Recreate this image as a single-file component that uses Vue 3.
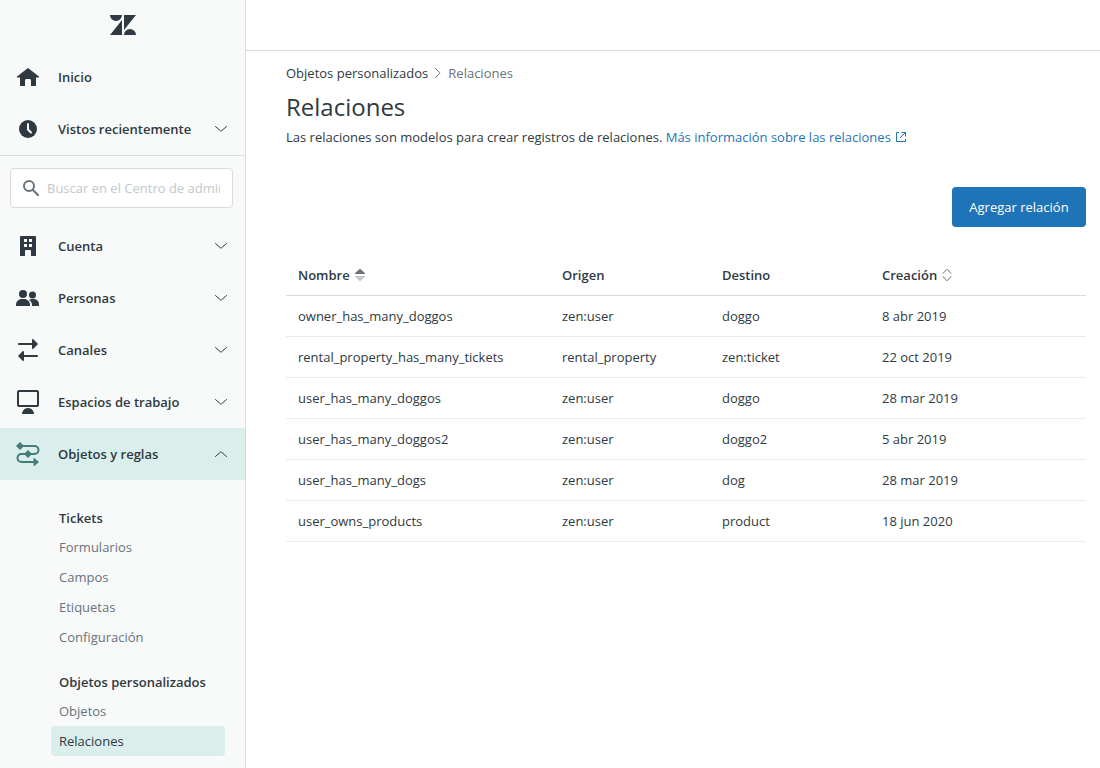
<script setup>
import { ref } from 'vue'

const query = ref('')

const mainItems = [
  { id: 'cuenta', label: 'Cuenta' },
  { id: 'personas', label: 'Personas' },
  { id: 'canales', label: 'Canales' },
  { id: 'espacios', label: 'Espacios de trabajo' },
  { id: 'objetos', label: 'Objetos y reglas', open: true },
]

const groups = [
  { title: 'Tickets', links: ['Formularios', 'Campos', 'Etiquetas', 'Configuración'] },
  { title: 'Objetos personalizados', links: ['Objetos', 'Relaciones'] },
]

const rows = [
  ['owner_has_many_doggos', 'zen:user', 'doggo', '8 abr 2019'],
  ['rental_property_has_many_tickets', 'rental_property', 'zen:ticket', '22 oct 2019'],
  ['user_has_many_doggos', 'zen:user', 'doggo', '28 mar 2019'],
  ['user_has_many_doggos2', 'zen:user', 'doggo2', '5 abr 2019'],
  ['user_has_many_dogs', 'zen:user', 'dog', '28 mar 2019'],
  ['user_owns_products', 'zen:user', 'product', '18 jun 2020'],
]
</script>

<template>
  <div class="app">
    <aside class="sidebar">
      <div class="logo">
        <svg width="26" height="20" viewBox="0 0 26 20" role="img" aria-label="Zendesk">
          <path d="M0 0h12a6 6 0 0 1-12 0zM12 5v15H0zM14 0h12L14 15zM14 20a6 6 0 0 1 12 0z" />
        </svg>
      </div>

      <nav class="nav top">
        <a class="item" href="#">
          <svg class="icon" viewBox="0 0 24 24" aria-hidden="true">
            <path d="M12 3l11 8.500c.4.400.2 1-.4 1H20V20c0 .6-.4 1-1 1h-4v-5.500c0-1-.8-1.500-1.500-1.500h-3C9.800 14 9 14.500 9 15.500V21H5c-.6 0-1-.4-1-1v-7.500H1.400c-.6 0-.8-.6-.4-1z" />
          </svg>
          <span class="label">Inicio</span>
        </a>
        <button class="item" type="button">
          <svg class="icon" viewBox="0 0 24 24" aria-hidden="true">
            <circle cx="12" cy="12" r="9" />
            <path class="clock-hands" d="M12 7v5.500l3 3" />
          </svg>
          <span class="label">Vistos recientemente</span>
          <svg class="chevron" viewBox="0 0 12 12" aria-hidden="true"><path d="M.500 3.500l4.900 4.300c.3.300.9.300 1.200 0l4.900-4.300" /></svg>
        </button>
      </nav>

      <label class="search">
        <svg viewBox="0 0 16 16" aria-hidden="true">
          <circle cx="6" cy="6" r="5" />
          <path d="M9.700 9.700l5.500 5.500" />
        </svg>
        <input v-model="query" type="text" aria-label="Buscar" placeholder="Buscar en el Centro de administración" />
      </label>

      <nav class="nav">
        <button
          v-for="item in mainItems"
          :key="item.id"
          type="button"
          class="item"
          :class="{ open: item.open }"
          :aria-expanded="!!item.open"
        >
          <svg class="icon" viewBox="0 0 24 24" aria-hidden="true">
            <path
              v-if="item.id === 'cuenta'"
              fill-rule="evenodd"
              d="M5 2h14a1 1 0 0 1 1 1v19h-5v-5a1 1 0 0 0-1-1h-4a1 1 0 0 0-1 1v5H4V3a1 1 0 0 1 1-1zM8 5v3h3V5zM13 5v3h3V5zM8 10v3h3v-3zM13 10v3h3v-3z"
            />
            <g v-else-if="item.id === 'personas'">
              <circle cx="7" cy="8" r="4" />
              <circle cx="16.500" cy="9" r="3.500" />
              <path d="M0 20v-1c0-3.500 2.500-6 6-6h2c3.500 0 6 2.500 6 6v1zM13 14c.8-.6 1.800-1 3-1h1.500c3.300 0 5.500 2.300 5.500 5.500V20h-7v-1c0-2-.9-3.700-3-5z" />
            </g>
            <g v-else-if="item.id === 'canales'">
              <path class="line" d="M3 6h13M8 18h13" />
              <path d="M16 1.800c0-.8.800-1.100 1.400-.6L22 6l-4.600 4.800c-.6.500-1.400.2-1.400-.6zM8 13.800c0-.8-.8-1.100-1.400-.6L2 18l4.600 4.800c.6.500 1.400.2 1.400-.6z" />
            </g>
            <g v-else-if="item.id === 'espacios'">
              <rect class="line" x="2" y="1" width="20" height="15" rx="1" />
              <path d="M6 24c0-3 2.500-6 6-6s6 3 6 6z" />
            </g>
            <g v-else>
              <path class="line" d="M3 4h15.500a4 4 0 0 1 0 8h-13a4 4 0 0 0 0 8H19" />
              <path d="M4 0L8 4 4 8 0 4zM12 8l4 4-4 4-4-4zM17.500 16.800c0-.8.600-1 1.100-.6L23 20l-4.400 3.800c-.5.400-1.100.2-1.100-.6z" />
            </g>
          </svg>
          <span class="label">{{ item.label }}</span>
          <svg class="chevron" viewBox="0 0 12 12" aria-hidden="true"><path d="M.500 3.500l4.900 4.300c.3.300.9.300 1.200 0l4.900-4.300" /></svg>
        </button>
      </nav>

      <section v-for="group in groups" :key="group.title" class="group">
        <h2>{{ group.title }}</h2>
        <a v-for="link in group.links" :key="link" href="#" :class="{ current: link === 'Relaciones' }">{{ link }}</a>
      </section>
    </aside>

    <div class="content">
      <header class="topbar"></header>
      <main>
        <nav class="crumbs" aria-label="Ruta">
          <a href="#">Objetos personalizados</a>
          <svg viewBox="0 0 12 12" aria-hidden="true"><path d="M3.500 1.500l4.200 4c.3.300.3.700 0 1l-4.200 4" /></svg>
          <span>Relaciones</span>
        </nav>
        <h1>Relaciones</h1>
        <p class="intro">
          Las relaciones son modelos para crear registros de relaciones.
          <a href="#">Más información sobre las relaciones<svg viewBox="0 0 12 12" aria-hidden="true"><path d="M4 1.500H1.500v9h9V8M6.500 1.500h4v4M10.500 1.500L5 7" /></svg></a>
        </p>

        <div class="actions">
          <button class="primary" type="button">Agregar relación</button>
        </div>

        <table>
          <thead>
            <tr>
              <th class="name" aria-sort="ascending">
                <button type="button">
                  Nombre
                  <svg viewBox="0 0 12 14" aria-hidden="true"><path class="up" d="M5.300 1.300L1 5.300c-.3.300-.1.700.3.700h9.400c.4 0 .6-.4.300-.7l-4.300-4c-.4-.4-1-.4-1.400 0z" /><path class="down" d="M5.300 12.700L1 8.700c-.3-.3-.1-.7.300-.7h9.400c.4 0 .6.400.3.700l-4.300 4c-.4.400-1 .4-1.400 0z" /></svg>
                </button>
              </th>
              <th class="mid">Origen</th>
              <th class="mid">Destino</th>
              <th>
                <button type="button">
                  Creación
                  <svg class="unsorted" viewBox="0 0 12 14" aria-hidden="true"><path d="M2 5.500l3.600-4c.3-.3.500-.3.800 0l3.600 4M2 8.500l3.600 4c.3.300.5.300.8 0l3.600-4" /></svg>
                </button>
              </th>
            </tr>
          </thead>
          <tbody>
            <tr v-for="row in rows" :key="row[0]">
              <td v-for="(cell, i) in row" :key="i">{{ cell }}</td>
            </tr>
          </tbody>
        </table>
      </main>
    </div>
  </div>
</template>

<style>
body {
  margin: 0;
  background: #fff;
}
</style>

<style scoped>
.app {
  display: flex;
  min-height: 100vh;
  color: #2f3941;
  font: 13px/20px "Open Sans", "Noto Sans", sans-serif;
}
* {
  box-sizing: border-box;
}
a {
  color: inherit;
  text-decoration: none;
}
button {
  font: inherit;
  color: inherit;
  border: 0;
  padding: 0;
  background: none;
  text-align: left;
}
.sidebar {
  flex: 0 0 246px;
  min-width: 0;
  background: #f8f9f9;
  border-right: 1px solid #d8dcde;
  padding-bottom: 12px;
}
.logo {
  height: 50px;
  margin-bottom: 1px;
  display: flex;
  align-items: center;
  justify-content: center;
}
.logo svg {
  fill: #2f3941;
}
.nav {
  display: flex;
  flex-direction: column;
}
.nav.top {
  border-bottom: 1px solid #d8dcde;
}
.item {
  display: flex;
  align-items: center;
  height: 52px;
  padding: 0 18px 0 16px;
  font-weight: 600;
}
.item.open {
  background: #daeeec;
}
.icon {
  width: 24px;
  height: 24px;
  margin-right: 18px;
  fill: #2f3941;
}
.icon .line {
  fill: none;
  stroke: #2f3941;
  stroke-width: 2;
  stroke-linecap: round;
}
.item.open .icon {
  fill: #467b7c;
}
.item.open .line {
  stroke: #467b7c;
}
.icon .clock-hands {
  fill: none;
  stroke: #f8f9f9;
  stroke-width: 2;
  stroke-linecap: round;
}
.label {
  flex: 1;
}
.chevron {
  width: 12px;
  height: 12px;
  fill: none;
  stroke: #2f3941;
  stroke-linecap: round;
}
.item.open .chevron {
  transform: rotate(180deg);
}
.search {
  display: flex;
  align-items: center;
  height: 40px;
  margin: 12px 12px 12px 10px;
  padding: 0 12px;
  background: #fff;
  border: 1px solid #d8dcde;
  border-radius: 4px;
}
.search svg {
  flex: none;
  width: 16px;
  height: 16px;
  margin-right: 8px;
  fill: none;
  stroke: #68737d;
  stroke-width: 2;
  stroke-linecap: round;
}
.search input {
  flex: 1;
  min-width: 0;
  border: 0;
  padding: 0;
  outline: 0;
  background: none;
  font: inherit;
  color: inherit;
}
.search input::placeholder {
  color: #c2c8cc;
  opacity: 1;
}
.group {
  margin: 28px 20px 0 51px;
}
.group + .group {
  margin-top: 20px;
}
.group h2 {
  margin: 0;
  padding: 0 8px 4px;
  font-size: 13px;
  line-height: 20px;
  font-weight: 600;
}
.group a {
  display: block;
  padding: 5px 8px;
  border-radius: 4px;
  color: #68737d;
}
.group a.current {
  background: #daeeec;
  color: #2f3941;
}
.content {
  flex: 1;
  min-width: 0;
}
.topbar {
  height: 51px;
  border-bottom: 1px solid #d8dcde;
}
main {
  padding: 12px 14px 0 40px;
}
.crumbs {
  display: flex;
  align-items: center;
  color: #68737d;
}
.crumbs a {
  color: #2f3941;
}
.crumbs svg {
  width: 12px;
  height: 12px;
  margin: 0 4px;
  fill: none;
  stroke: #68737d;
  stroke-linecap: round;
}
h1 {
  margin: 8px 0 4px;
  font-size: 24px;
  line-height: 32px;
  font-weight: 400;
}
.intro {
  margin: 0;
}
.intro a {
  color: #1f73b7;
}
.intro svg {
  width: 12px;
  height: 12px;
  margin-left: 4px;
  vertical-align: -1px;
  fill: none;
  stroke: #1f73b7;
}
.actions {
  display: flex;
  justify-content: flex-end;
  margin: 40px 0 28px;
}
.primary {
  height: 40px;
  min-width: 134px;
  padding: 0 16px;
  border-radius: 4px;
  background: #1f73b7;
  color: #fff;
  text-align: center;
}
table {
  width: 100%;
  table-layout: fixed;
  border-collapse: collapse;
}
th,
td {
  height: 41px;
  padding: 0 12px;
  text-align: left;
  border-bottom: 1px solid #e9ebed;
}
th {
  height: 40px;
  font-weight: 600;
  border-bottom-color: #d8dcde;
}
th.name {
  width: 33%;
}
th.mid {
  width: 20%;
}
th button {
  display: flex;
  align-items: center;
  gap: 4px;
}
th svg {
  width: 12px;
  height: 14px;
}
.up {
  fill: #68737d;
}
.down {
  fill: #c2c8cc;
}
.unsorted {
  fill: none;
  stroke: #68737d;
  stroke-linecap: round;
}
</style>
